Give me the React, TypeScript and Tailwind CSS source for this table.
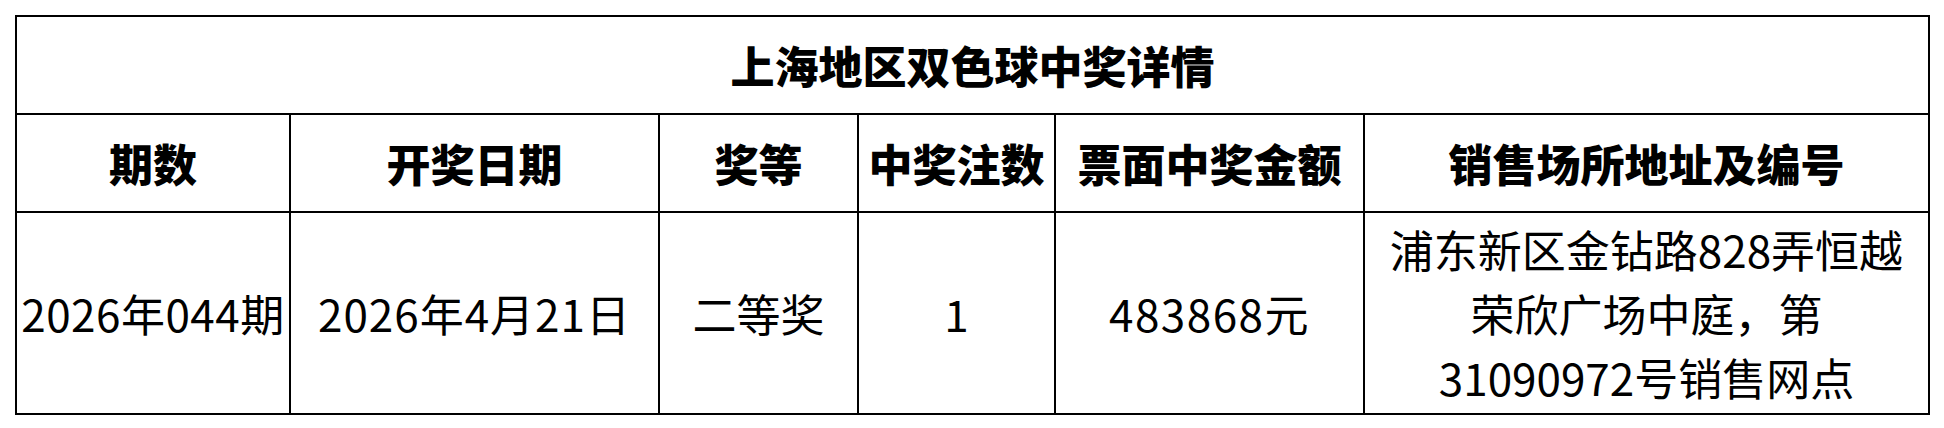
import React from "react";

export default function App() {
  const headers = ["期数", "开奖日期", "奖等", "中奖注数", "票面中奖金额", "销售场所地址及编号"];
  const cell = "border-2 border-black text-center align-middle p-0";
  return (
    <div className="w-[1944px] h-[428px] bg-white pt-[15px] pl-[15px] font-['Noto_Sans_CJK_SC',sans-serif] text-black">
      <table className="table-fixed border-collapse w-[1913px]">
        <colgroup>
          <col className="w-[274px]" />
          <col className="w-[369px]" />
          <col className="w-[199px]" />
          <col className="w-[197px]" />
          <col className="w-[309px]" />
          <col className="w-[565px]" />
        </colgroup>
        <tbody>
          <tr className="h-[98px]">
            <td colSpan={6} className={`${cell} text-[44px] font-black leading-none`}>
              上海地区双色球中奖详情
            </td>
          </tr>
          <tr className="h-[98px]">
            {headers.map((h) => (
              <td key={h} className={`${cell} text-[44px] font-black leading-none whitespace-nowrap`}>
                {h}
              </td>
            ))}
          </tr>
          <tr className="h-[202px]">
            <td className={`${cell} text-[44px] leading-none whitespace-nowrap tracking-[0.5px]`}>2026年044期</td>
            <td className={`${cell} text-[44px] leading-none whitespace-nowrap tracking-[1px]`}>2026年4月21日</td>
            <td className={`${cell} text-[44px] leading-none whitespace-nowrap`}>二等奖</td>
            <td className={`${cell} text-[44px] leading-none whitespace-nowrap`}>1</td>
            <td className={`${cell} text-[44px] leading-none whitespace-nowrap tracking-[1.5px]`}>483868元</td>
            <td className={`${cell} text-[44px] leading-[64px] whitespace-nowrap`}>
              浦东新区金钻路828弄恒越
              <br />
              荣欣广场中庭，第
              <br />
              31090972号销售网点
            </td>
          </tr>
        </tbody>
      </table>
    </div>
  );
}
